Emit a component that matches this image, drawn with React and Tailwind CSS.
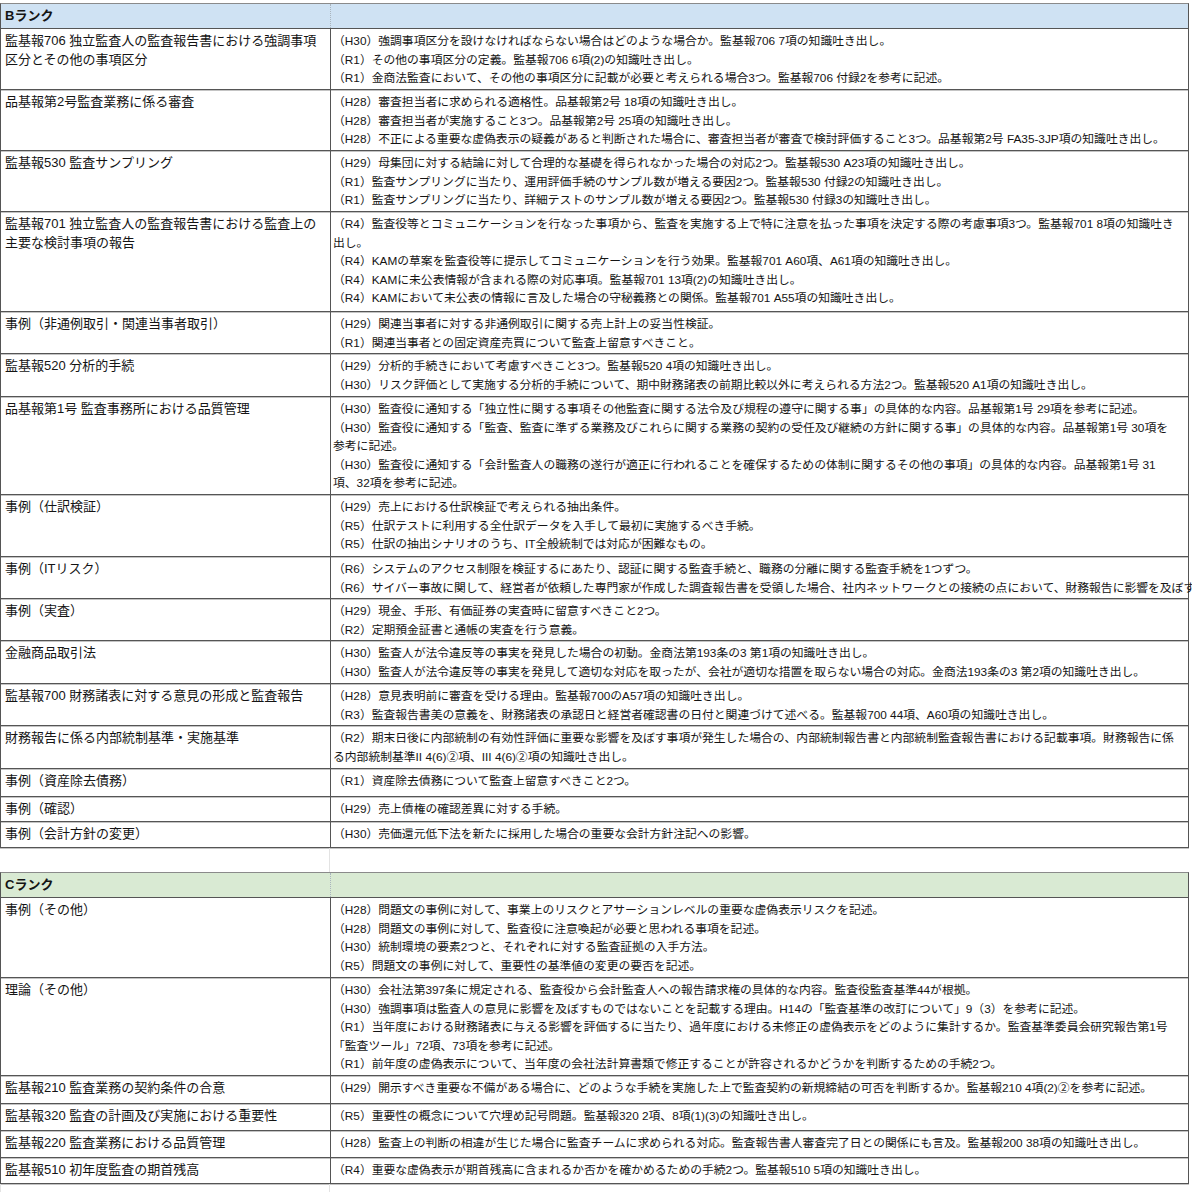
const B_ROWS = [
  {
    h: 61,
    left: ['監基報706 独立監査人の監査報告書における強調事項', '区分とその他の事項区分'],
    lines: [
      '（H30）強調事項区分を設けなければならない場合はどのような場合か。監基報706 7項の知識吐き出し。',
      '（R1）その他の事項区分の定義。監基報706 6項(2)の知識吐き出し。',
      '（R1）金商法監査において、その他の事項区分に記載が必要と考えられる場合3つ。監基報706 付録2を参考に記述。',
    ],
  },
  {
    h: 61,
    left: ['品基報第2号監査業務に係る審査'],
    lines: [
      '（H28）審査担当者に求められる適格性。品基報第2号 18項の知識吐き出し。',
      '（H28）審査担当者が実施すること3つ。品基報第2号 25項の知識吐き出し。',
      '（H28）不正による重要な虚偽表示の疑義があると判断された場合に、審査担当者が審査で検討評価すること3つ。品基報第2号 FA35-3JP項の知識吐き出し。',
    ],
  },
  {
    h: 61,
    left: ['監基報530 監査サンプリング'],
    lines: [
      '（H29）母集団に対する結論に対して合理的な基礎を得られなかった場合の対応2つ。監基報530 A23項の知識吐き出し。',
      '（R1）監査サンプリングに当たり、運用評価手続のサンプル数が増える要因2つ。監基報530 付録2の知識吐き出し。',
      '（R1）監査サンプリングに当たり、詳細テストのサンプル数が増える要因2つ。監基報530 付録3の知識吐き出し。',
    ],
  },
  {
    h: 100,
    left: ['監基報701 独立監査人の監査報告書における監査上の', '主要な検討事項の報告'],
    lines: [
      '（R4）監査役等とコミュニケーションを行なった事項から、監査を実施する上で特に注意を払った事項を決定する際の考慮事項3つ。監基報701 8項の知識吐き',
      '出し。',
      '（R4）KAMの草案を監査役等に提示してコミュニケーションを行う効果。監基報701 A60項、A61項の知識吐き出し。',
      '（R4）KAMに未公表情報が含まれる際の対応事項。監基報701 13項(2)の知識吐き出し。',
      '（R4）KAMにおいて未公表の情報に言及した場合の守秘義務との関係。監基報701 A55項の知識吐き出し。',
    ],
  },
  {
    h: 42,
    left: ['事例（非通例取引・関連当事者取引）'],
    lines: [
      '（H29）関連当事者に対する非通例取引に関する売上計上の妥当性検証。',
      '（R1）関連当事者との固定資産売買について監査上留意すべきこと。',
    ],
  },
  {
    h: 43,
    left: ['監基報520 分析的手続'],
    lines: [
      '（H29）分析的手続きにおいて考慮すべきこと3つ。監基報520 4項の知識吐き出し。',
      '（H30）リスク評価として実施する分析的手続について、期中財務諸表の前期比較以外に考えられる方法2つ。監基報520 A1項の知識吐き出し。',
    ],
  },
  {
    h: 98,
    left: ['品基報第1号 監査事務所における品質管理'],
    lines: [
      '（H30）監査役に通知する「独立性に関する事項その他監査に関する法令及び規程の遵守に関する事」の具体的な内容。品基報第1号 29項を参考に記述。',
      '（H30）監査役に通知する「監査、監査に準ずる業務及びこれらに関する業務の契約の受任及び継続の方針に関する事」の具体的な内容。品基報第1号 30項を',
      '参考に記述。',
      '（H30）監査役に通知する「会計監査人の職務の遂行が適正に行われることを確保するための体制に関するその他の事項」の具体的な内容。品基報第1号 31',
      '項、32項を参考に記述。',
    ],
  },
  {
    h: 62,
    left: ['事例（仕訳検証）'],
    lines: [
      '（H29）売上における仕訳検証で考えられる抽出条件。',
      '（R5）仕訳テストに利用する全仕訳データを入手して最初に実施するべき手続。',
      '（R5）仕訳の抽出シナリオのうち、IT全般統制では対応が困難なもの。',
    ],
  },
  {
    h: 42,
    left: ['事例（ITリスク）'],
    lines: [
      '（R6）システムのアクセス制限を検証するにあたり、認証に関する監査手続と、職務の分離に関する監査手続を1つずつ。',
      '（R6）サイバー事故に関して、経営者が依頼した専門家が作成した調査報告書を受領した場合、社内ネットワークとの接続の点において、財務報告に影響を及ぼす',
    ],
  },
  {
    h: 42,
    left: ['事例（実査）'],
    lines: ['（H29）現金、手形、有価証券の実査時に留意すべきこと2つ。', '（R2）定期預金証書と通帳の実査を行う意義。'],
  },
  {
    h: 43,
    left: ['金融商品取引法'],
    lines: [
      '（H30）監査人が法令違反等の事実を発見した場合の初動。金商法第193条の3 第1項の知識吐き出し。',
      '（H30）監査人が法令違反等の事実を発見して適切な対応を取ったが、会社が適切な措置を取らない場合の対応。金商法193条の3 第2項の知識吐き出し。',
    ],
  },
  {
    h: 42,
    left: ['監基報700 財務諸表に対する意見の形成と監査報告'],
    lines: [
      '（H28）意見表明前に審査を受ける理由。監基報700のA57項の知識吐き出し。',
      '（R3）監査報告書美の意義を、財務諸表の承認日と経営者確認書の日付と関連づけて述べる。監基報700 44項、A60項の知識吐き出し。',
    ],
  },
  {
    h: 43,
    left: ['財務報告に係る内部統制基準・実施基準'],
    lines: [
      '（R2）期末日後に内部統制の有効性評価に重要な影響を及ぼす事項が発生した場合の、内部統制報告書と内部統制監査報告書における記載事項。財務報告に係',
      'る内部統制基準II 4(6)②項、III 4(6)②項の知識吐き出し。',
    ],
  },
  { h: 28, left: ['事例（資産除去債務）'], lines: ['（R1）資産除去債務について監査上留意すべきこと2つ。'] },
  { h: 25, left: ['事例（確認）'], lines: ['（H29）売上債権の確認差異に対する手続。'] },
  { h: 26, left: ['事例（会計方針の変更）'], lines: ['（H30）売価還元低下法を新たに採用した場合の重要な会計方針注記への影響。'] },
];

const C_ROWS = [
  {
    h: 80,
    left: ['事例（その他）'],
    lines: [
      '（H28）問題文の事例に対して、事業上のリスクとアサーションレベルの重要な虚偽表示リスクを記述。',
      '（H28）問題文の事例に対して、監査役に注意喚起が必要と思われる事項を記述。',
      '（H30）統制環境の要素2つと、それぞれに対する監査証拠の入手方法。',
      '（R5）問題文の事例に対して、重要性の基準値の変更の要否を記述。',
    ],
  },
  {
    h: 98,
    left: ['理論（その他）'],
    lines: [
      '（H30）会社法第397条に規定される、監査役から会計監査人への報告請求権の具体的な内容。監査役監査基準44が根拠。',
      '（H30）強調事項は監査人の意見に影響を及ぼすものではないことを記載する理由。H14の「監査基準の改訂について」9（3）を参考に記述。',
      '（R1）当年度における財務諸表に与える影響を評価するに当たり、過年度における未修正の虚偽表示をどのように集計するか。監査基準委員会研究報告第1号',
      '「監査ツール」72項、73項を参考に記述。',
      '（R1）前年度の虚偽表示について、当年度の会社法計算書類で修正することが許容されるかどうかを判断するための手続2つ。',
    ],
  },
  {
    h: 28,
    left: ['監基報210 監査業務の契約条件の合意'],
    lines: ['（H29）開示すべき重要な不備がある場合に、どのような手続を実施した上で監査契約の新規締結の可否を判断するか。監基報210 4項(2)②を参考に記述。'],
  },
  {
    h: 27,
    left: ['監基報320 監査の計画及び実施における重要性'],
    lines: ['（R5）重要性の概念について穴埋め記号問題。監基報320 2項、8項(1)(3)の知識吐き出し。'],
  },
  {
    h: 27,
    left: ['監基報220 監査業務における品質管理'],
    lines: ['（H28）監査上の判断の相違が生じた場合に監査チームに求められる対応。監査報告書人審査完了日との関係にも言及。監基報200 38項の知識吐き出し。'],
  },
  {
    h: 26,
    left: ['監基報510 初年度監査の期首残高'],
    lines: ['（R4）重要な虚偽表示が期首残高に含まれるか否かを確かめるための手続2つ。監基報510 5項の知識吐き出し。'],
  },
];

function SectionHeader({ label, tone }) {
  return (
    <div className={`flex h-[26px] border-x border-b border-t border-x-[#555] border-b-[#555] border-t-[#8a8a8a] ${tone}`}>
      <div className="w-[330px] shrink-0 border-r border-dotted border-[#a9b4bd] pl-[4px] pt-[3px] text-[13px] font-bold leading-[18.5px]">
        {label}
      </div>
      <div className="flex-1" />
    </div>
  );
}

function Row({ row }) {
  return (
    <div
      className="flex border-x border-b border-[#555] shadow-[0_1px_0_#c4c4c4]"
      style={{ height: row.h }}
    >
      <div className="w-[330px] shrink-0 border-r border-[#555] pl-[4px] pt-[3px] text-[13px] leading-[18.5px]">
        {row.left.map((t) => (
          <div key={t} className="whitespace-nowrap">
            {t}
          </div>
        ))}
      </div>
      <div className="min-w-0 flex-1 pl-[2px] pt-[3px] text-[11.8px] leading-[18.5px]">
        {row.lines.map((t, i) => (
          <div key={i} className="whitespace-nowrap">
            {t}
          </div>
        ))}
      </div>
    </div>
  );
}

export default function App() {
  return (
    <div className="h-[1192px] w-[1192px] overflow-hidden bg-white pt-[3px] font-['Liberation_Sans','Noto_Sans_CJK_JP',sans-serif] text-[#141414]">
      <div className="w-[1189px]">
        <SectionHeader label="Bランク" tone="bg-[#cfe2f3]" />
        {B_ROWS.map((r, i) => (
          <Row key={i} row={r} />
        ))}

        {/* blank spacer row between the two ranks */}
        <div className="flex h-[24px]">
          <div className="w-[330px] shrink-0 border-r border-[#e3e3e3]" />
          <div className="flex-1" />
        </div>

        <SectionHeader label="Cランク" tone="bg-[#d9ead3]" />
        {C_ROWS.map((r, i) => (
          <Row key={i} row={r} />
        ))}

        <div className="flex h-[20px]">
          <div className="w-[330px] shrink-0 border-l border-r border-[#e3e3e3]" />
          <div className="flex-1" />
        </div>
      </div>
    </div>
  );
}
